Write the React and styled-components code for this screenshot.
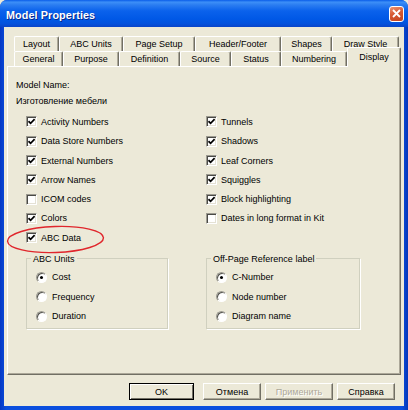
import React from 'react'
import styled, { createGlobalStyle } from 'styled-components'

const GlobalStyle = createGlobalStyle`
  html, body {
    margin: 0;
    padding: 0;
    background: #ece9d8;
  }
  body {
    font-family: "Liberation Sans", Arial, sans-serif;
    font-size: 9px;
    color: #000;
  }
`

const Window = styled.div`
  position: relative;
  width: 408px;
  height: 410px;
  display: flex;
  flex-direction: column;
  background: linear-gradient(90deg, #0538c4 0%, #0a4ede 1.5%, #0a4ede 98.5%, #0436b8 100%);
  border-radius: 7px 7px 0 0;
  overflow: hidden;
`

const TitleBar = styled.div`
  height: 27px;
  flex: none;
  display: flex;
  align-items: center;
  justify-content: space-between;
  padding: 0 4px 0 6px;
  background: linear-gradient(
    180deg,
    #0a5de9 0%,
    #3d8ff7 8%,
    #2b7df1 18%,
    #0b62ec 40%,
    #0058e6 70%,
    #0452dc 88%,
    #0a44c8 100%
  );
`

const Title = styled.div`
  color: #fff;
  font-family: "Liberation Sans", Arial, sans-serif;
  font-weight: bold;
  font-size: 10.8px;
  letter-spacing: 0.1px;
  text-shadow: 1px 1px 0 #0a2a8a;
  padding-top: 2px;
`

const CloseButton = styled.div`
  width: 15px;
  height: 16px;
  box-sizing: border-box;
  border: 1px solid #fff;
  border-radius: 3px;
  background: linear-gradient(160deg, #ec9472 0%, #d75a34 45%, #c3421d 100%);
  display: flex;
  align-items: center;
  justify-content: center;
`

const Body = styled.div`
  flex: 1;
  margin: 0 4px 4px 4px;
  background: #ece9d8;
  display: flex;
  flex-direction: column;
  padding: 9px 3px 0 3px;
`

const TabRow = styled.div`
  height: 15px;
  display: flex;
  align-items: flex-end;
  padding-left: 7px;
`

const Tab = styled.div`
  position: relative;
  box-sizing: border-box;
  width: ${p => p.$w}px;
  height: ${p => (p.$active ? 20 : 15)}px;
  margin-bottom: ${p => (p.$active ? -1 : 0)}px;
  z-index: ${p => (p.$active ? 2 : 1)};
  display: flex;
  align-items: center;
  justify-content: center;
  background: #ece9d8;
  border-top: 1px solid #fff;
  border-left: 1px solid #fff;
  border-right: 1px solid #716f64;
  box-shadow: inset -1px 0 0 #aca899;
  border-radius: 2px 2px 0 0;
  white-space: nowrap;
  padding-bottom: ${p => (p.$active ? 2 : 0)}px;
`

const Panel = styled.div`
  height: 309px;
  box-sizing: border-box;
  border-top: 1px solid #fff;
  border-left: 1px solid #fff;
  border-right: 1px solid #716f64;
  border-bottom: 1px solid #716f64;
  box-shadow: inset -1px -1px 0 #aca899;
  padding: 11px 0 0 8px;
  display: flex;
  flex-direction: column;
`

const Caption = styled.div`
  line-height: 14px;
  height: 14px;
  margin-top: ${p => p.$gap || 0}px;
  white-space: nowrap;
`

const Columns = styled.div`
  display: grid;
  grid-template-columns: 180px 1fr;
  margin-left: 10px;
  margin-top: ${p => p.$gap || 0}px;
`

const Stack = styled.div`
  display: flex;
  flex-direction: column;
`

const Option = styled.div`
  height: ${p => p.$h}px;
  display: flex;
  align-items: center;
  gap: ${p => p.$gap}px;
  white-space: nowrap;
`

const Box = styled.span`
  width: 11px;
  height: 11px;
  box-sizing: border-box;
  flex: none;
  background: #fff;
  border-top: 1px solid #9c9a90;
  border-left: 1px solid #9c9a90;
  border-right: 1px solid #fff;
  border-bottom: 1px solid #fff;
  box-shadow: inset 1px 1px 0 #4a4a46, inset -1px -1px 0 #e4e1d4;
  display: flex;
  align-items: center;
  justify-content: center;
`

const Round = styled.span`
  width: 11px;
  height: 11px;
  box-sizing: border-box;
  flex: none;
  border-radius: 50%;
  background: #fff;
  border: 1px solid;
  border-color: #9c9a90 #fff #fff #9c9a90;
  box-shadow: inset 1px 1px 0 #55554f;
  display: flex;
  align-items: center;
  justify-content: center;

  &::after {
    content: '';
    width: 3px;
    height: 3px;
    border-radius: 50%;
    background: ${p => (p.$on ? '#000' : 'transparent')};
  }
`

const Group = styled.fieldset`
  margin: 0;
  width: ${p => p.$w}px;
  box-sizing: border-box;
  border: 1px solid #d0d0bf;
  box-shadow: 1px 1px 0 #fff;
  padding: 2.5px 0 2px 9px;
  min-width: 0;
`

const Legend = styled.legend`
  padding: 0 2px;
  margin-left: -5px;
  line-height: 12px;
  font-size: 9px;
`

const Buttons = styled.div`
  display: flex;
  justify-content: flex-end;
  margin-top: 8px;
  padding-right: 6px;
`

const Button = styled.div`
  width: ${p => p.$w}px;
  height: 17px;
  box-sizing: border-box;
  margin-left: ${p => p.$gap}px;
  display: flex;
  align-items: center;
  justify-content: center;
  background: #ece9d8;
  border: 1px solid;
  border-color: ${p => (p.$default ? '#000' : '#fff #716f64 #716f64 #fff')};
  box-shadow: ${p =>
    p.$default
      ? 'inset 1px 1px 0 #fff, inset -1px -1px 0 #716f64'
      : 'inset -1px -1px 0 #aca899'};
  color: ${p => (p.disabled ? '#aca899' : '#000')};
  text-shadow: ${p => (p.disabled ? '1px 1px 0 #fff' : 'none')};
  white-space: nowrap;
`

const Highlight = styled.svg`
  position: absolute;
  left: 0;
  top: 0;
  pointer-events: none;
`

const Check = ({ on, children }) => (
  <Option $h={19.3} $gap={4}>
    <Box>
      {on && (
        <svg width="7" height="7" viewBox="0 0 7 7">
          <path d="M0.5 3.2 L2.6 5.3 L6.6 1.2" fill="none" stroke="#000" strokeWidth="1.7" />
        </svg>
      )}
    </Box>
    <span>{children}</span>
  </Option>
)

const Radio = ({ on, children }) => (
  <Option $h={19.5} $gap={5}>
    <Round $on={on} />
    <span>{children}</span>
  </Option>
)

const topTabs = [
  ['Layout', 45],
  ['ABC Units', 64],
  ['Page Setup', 72],
  ['Header/Footer', 86],
  ['Shapes', 51],
  ['Draw Style', 67]
]

const bottomTabs = [
  ['General', 49],
  ['Purpose', 56],
  ['Definition', 61],
  ['Source', 51],
  ['Status', 50],
  ['Numbering', 66],
  ['Display', 54, true]
]

const leftChecks = [
  ['Activity Numbers', true],
  ['Data Store Numbers', true],
  ['External Numbers', true],
  ['Arrow Names', true],
  ['ICOM codes', false],
  ['Colors', true],
  ['ABC Data', true]
]

const rightChecks = [
  ['Tunnels', true],
  ['Shadows', true],
  ['Leaf Corners', true],
  ['Squiggles', true],
  ['Block highlighting', true],
  ['Dates in long format in Kit', false]
]

const App = () => (
  <>
    <GlobalStyle />
    <Window>
      <TitleBar>
        <Title>Model Properties</Title>
        <CloseButton>
          <svg width="9" height="9" viewBox="0 0 9 9">
            <path d="M1 1 L8 8 M8 1 L1 8" stroke="#fff" strokeWidth="1.8" />
          </svg>
        </CloseButton>
      </TitleBar>
      <Body>
        <TabRow>
          {topTabs.map(([t, w]) => (
            <Tab key={t} $w={w}>
              {t}
            </Tab>
          ))}
        </TabRow>
        <TabRow>
          {bottomTabs.map(([t, w, a]) => (
            <Tab key={t} $w={w} $active={a}>
              {t}
            </Tab>
          ))}
        </TabRow>
        <Panel>
          <Caption>Model Name:</Caption>
          <Caption $gap={2}>Изготовление мебели</Caption>
          <Columns $gap={4.35}>
            <Stack>
              {leftChecks.map(([t, on]) => (
                <Check key={t} on={on}>
                  {t}
                </Check>
              ))}
            </Stack>
            <Stack>
              {rightChecks.map(([t, on]) => (
                <Check key={t} on={on}>
                  {t}
                </Check>
              ))}
            </Stack>
          </Columns>
          <Columns $gap={5.55}>
            <Group $w={142}>
              <Legend>ABC Units</Legend>
              <Radio on>Cost</Radio>
              <Radio>Frequency</Radio>
              <Radio>Duration</Radio>
            </Group>
            <Group $w={154}>
              <Legend>Off-Page Reference label</Legend>
              <Radio on>C-Number</Radio>
              <Radio>Node number</Radio>
              <Radio>Diagram name</Radio>
            </Group>
          </Columns>
        </Panel>
        <Buttons>
          <Button $w={65} $gap={0} $default>
            OK
          </Button>
          <Button $w={58} $gap={9}>
            Отмена
          </Button>
          <Button $w={68} $gap={4} disabled>
            Применить
          </Button>
          <Button $w={58} $gap={4}>
            Справка
          </Button>
        </Buttons>
      </Body>
      <Highlight width="408" height="410" viewBox="0 0 408 410">
        <ellipse
          cx="55.5"
          cy="239.5"
          rx="48"
          ry="13"
          fill="none"
          stroke="#e0262c"
          strokeWidth="1.4"
          transform="rotate(-2 55.5 239.5)"
        />
      </Highlight>
    </Window>
  </>
)

export default App
